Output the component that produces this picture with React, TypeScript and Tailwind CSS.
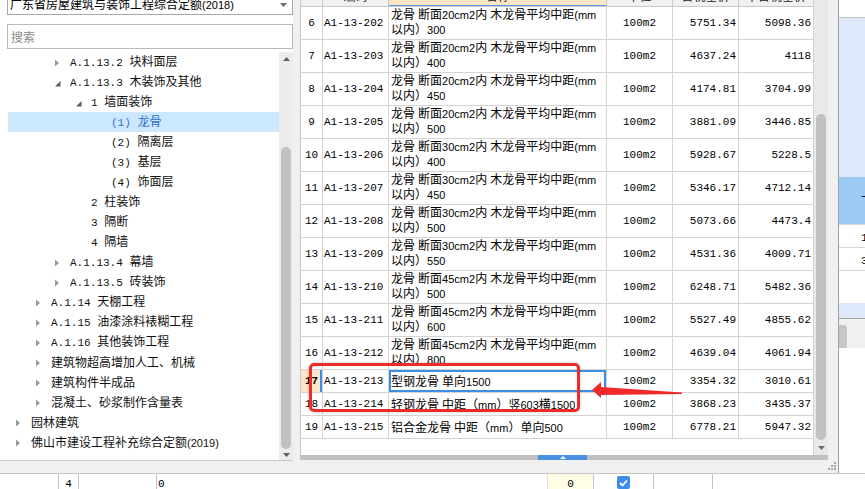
import React from "react";

const MONO = "font-['Liberation_Mono',monospace] text-[11px]";
const SANS = "font-['Liberation_Sans',sans-serif] text-[11px]";

function Mx({ t, a = "mono" }: { t: string; a?: "mono" | "sans" }) {
  const parts = t.match(/[\x00-\x7F]+|[^\x00-\x7F]+/g) ?? [];
  return (
    <>
      {parts.map((p, i) =>
        /^[\x00-\x7F]/.test(p) ? (
          <span key={i} className={a === "mono" ? MONO : SANS}>
            {p}
          </span>
        ) : (
          <span key={i}>{p}</span>
        )
      )}
    </>
  );
}

type TreeItem = { l: number; a: "c" | "e" | "n"; t: string; sel?: boolean; s?: boolean };

const tree: TreeItem[] = [
  { l: 2, a: "c", t: "A.1.13.2 块料面层" },
  { l: 2, a: "e", t: "A.1.13.3 木装饰及其他" },
  { l: 3, a: "e", t: "1 墙面装饰" },
  { l: 4, a: "n", t: "(1) 龙骨", sel: true },
  { l: 4, a: "n", t: "(2) 隔离层" },
  { l: 4, a: "n", t: "(3) 基层" },
  { l: 4, a: "n", t: "(4) 饰面层" },
  { l: 3, a: "n", t: "2 柱装饰" },
  { l: 3, a: "n", t: "3 隔断" },
  { l: 3, a: "n", t: "4 隔墙" },
  { l: 2, a: "c", t: "A.1.13.4 幕墙" },
  { l: 2, a: "c", t: "A.1.13.5 砖装饰" },
  { l: 1, a: "c", t: "A.1.14 天棚工程" },
  { l: 1, a: "c", t: "A.1.15 油漆涂料裱糊工程" },
  { l: 1, a: "c", t: "A.1.16 其他装饰工程" },
  { l: 1, a: "c", t: "建筑物超高增加人工、机械" },
  { l: 1, a: "c", t: "建筑构件半成品" },
  { l: 1, a: "c", t: "混凝土、砂浆制作含量表" },
  { l: 0, a: "c", t: "园林建筑" },
  { l: 0, a: "c", t: "佛山市建设工程补充综合定额(2019)", s: true },
];

const PL: Record<number, string> = {
  0: "pl-[8px]",
  1: "pl-[28px]",
  2: "pl-[47px]",
  3: "pl-[68px]",
  4: "pl-[88px]",
};

function Arrow({ a }: { a: "c" | "e" | "n" }) {
  if (a === "c")
    return (
      <svg width="5" height="8" viewBox="0 0 5 8" className="mt-[2px]">
        <polygon points="0,0.5 4,4 0,7.5" fill="#9a9a9a" />
      </svg>
    );
  if (a === "e")
    return (
      <svg width="6" height="6" viewBox="0 0 6 6" className="mt-[4px]">
        <polygon points="5.5,0 5.5,5.5 0,5.5" fill="#5a5a5a" />
      </svg>
    );
  return null;
}

function LeftPanel() {
  return (
    <div className="w-[293px] h-[473px] flex flex-col bg-white">
      <div className="h-[15px] pl-[7px] shrink-0">
        <div className="w-[286px] h-[15px] border-x border-b border-[#a9a9a9] overflow-hidden flex justify-between">
          <div className="-mt-[4px] pl-[2px] leading-[16px] whitespace-pre text-[12px] text-black">
            <Mx t="广东省房屋建筑与装饰工程综合定额(2018)" a="sans" />
          </div>
          <svg width="7" height="4" viewBox="0 0 7 4" className="mr-[5px] mt-[3px]">
            <polygon points="0,0 7,0 3.5,4" fill="#6e6e6e" />
          </svg>
        </div>
      </div>
      <div className="mt-[9px] ml-[7px] w-[286px] h-[25px] border border-[#b9b9b9] shrink-0 pl-[3px] leading-[23px] text-[12px] text-[#8a8a8a]">
        搜索
      </div>
      <div className="h-[412px] shrink-0 border-b border-[#c8c8c8] pt-[3px] pl-[8px] flex">
        <div className="w-[271px] h-[408px] overflow-hidden">
          {tree.map((it, i) => (
            <div
              key={i}
              className={`h-[20px] flex items-center ${PL[it.l]} ${it.sel ? "bg-[#cce8ff] text-[#2b6fd1]" : "text-[#111]"}`}
            >
              <div className="w-[15px] h-[20px] flex items-center">
                <Arrow a={it.a} />
              </div>
              <div className="whitespace-pre leading-[20px] text-[12px]">
                <Mx t={it.t} a={it.s ? "sans" : "mono"} />
              </div>
            </div>
          ))}
        </div>
        <div className="w-[14px] h-[408px] bg-[#ececec] flex flex-col items-center">
          <svg width="7" height="4" viewBox="0 0 7 4" className="mt-[5px] shrink-0">
            <polygon points="3.5,0 7,4 0,4" fill="#606060" />
          </svg>
          <div className="h-[86px] shrink-0" />
          <div className="w-[10px] h-[302px] rounded-full bg-[#c1c1c1] shrink-0" />
          <svg width="7" height="4" viewBox="0 0 7 4" className="mt-[4px] shrink-0">
            <polygon points="0,0 7,0 3.5,4" fill="#606060" />
          </svg>
        </div>
      </div>
      <div className="flex-1 bg-[#f0f0f0]" />
    </div>
  );
}

type Row = { n: number; c: string; d1: string; d2?: string; p1: string; p2: string };

const tall = [
  ["6", "A1-13-202", "20", "300", "5751.34", "5098.36"],
  ["7", "A1-13-203", "20", "400", "4637.24", "4118"],
  ["8", "A1-13-204", "20", "450", "4174.81", "3704.99"],
  ["9", "A1-13-205", "20", "500", "3881.09", "3446.85"],
  ["10", "A1-13-206", "30", "400", "5928.67", "5228.5"],
  ["11", "A1-13-207", "30", "450", "5346.17", "4712.14"],
  ["12", "A1-13-208", "30", "500", "5073.66", "4473.4"],
  ["13", "A1-13-209", "30", "550", "4531.36", "4009.71"],
  ["14", "A1-13-210", "45", "500", "6248.71", "5482.36"],
  ["15", "A1-13-211", "45", "600", "5527.49", "4855.62"],
  ["16", "A1-13-212", "45", "800", "4639.04", "4061.94"],
];

const rows: Row[] = [
  ...tall.map((r) => ({
    n: Number(r[0]),
    c: r[1],
    d1: `龙骨 断面${r[2]}cm2内 木龙骨平均中距(mm`,
    d2: `以内）${r[3]}`,
    p1: r[4],
    p2: r[5],
  })),
  { n: 17, c: "A1-13-213", d1: "型钢龙骨 单向1500", p1: "3354.32", p2: "3010.61" },
  { n: 18, c: "A1-13-214", d1: "轻钢龙骨 中距（mm）竖603横1500", p1: "3868.23", p2: "3435.37" },
  { n: 19, c: "A1-13-215", d1: "铝合金龙骨 中距（mm）单向500", p1: "6778.21", p2: "5947.32" },
];

const LINE = "border-l border-[#d4d4d4]";

function TableRow({ r }: { r: Row }) {
  const isTall = !!r.d2;
  const cur = r.n === 17;
  return (
    <div className={`flex ${isTall ? "h-[33px]" : "h-[23px]"} border-b border-[#d4d4d4] text-[12px] text-black`}>
      <div
        className={`w-[21px] flex items-center justify-center ${
          cur ? "bg-[#fde5c9] font-bold shadow-[inset_-2px_0_0_#3b8de6]" : "bg-white"
        }`}
      >
        <span className={MONO}>{r.n}</span>
      </div>
      <div className={`w-[66px] ${LINE} flex items-center pl-[1px]`}>
        <span className={MONO}>{r.c}</span>
      </div>
      <div
        className={`w-[218px] ${LINE} pl-[2px] overflow-hidden ${
          cur ? "shadow-[inset_0_0_0_2px_#3b8de6]" : ""
        } ${isTall ? "flex flex-col" : "flex items-center"}`}
      >
        <div className={`whitespace-pre overflow-hidden ${isTall ? "h-[14px] leading-[14px]" : ""}`}>
          <Mx t={r.d1} a="sans" />
        </div>
        {r.d2 && (
          <div className="whitespace-pre overflow-hidden h-[15px] leading-[15px]">
            <Mx t={r.d2} a="sans" />
          </div>
        )}
      </div>
      <div className={`w-[66px] ${LINE} flex items-center justify-center`}>
        <span className={MONO}>100m2</span>
      </div>
      <div className={`w-[66px] ${LINE} flex items-center justify-end pr-[2px]`}>
        <span className={MONO}>{r.p1}</span>
      </div>
      <div className={`w-[75px] ${LINE} flex items-center justify-end pr-[2px]`}>
        <span className={MONO}>{r.p2}</span>
      </div>
    </div>
  );
}

function HeadCell({ w, t, hl, first }: { w: string; t: string; hl?: boolean; first?: boolean }) {
  return (
    <div
      className={`${w} ${first ? "" : "border-l border-[#c8c8c8]"} h-[6px] overflow-hidden ${
        hl ? "bg-[#fde6c6] shadow-[inset_0_-1px_0_#5b9be6]" : "bg-[#f1f1f1]"
      }`}
    >
      <div className="-mt-[11px] leading-[14px] text-center text-[12px] text-[#222] whitespace-nowrap">{t}</div>
    </div>
  );
}

function MainPanel() {
  return (
    <div className="w-[546px] h-[473px] bg-[#f0f0f0] border-r border-[#a0a0a0] flex flex-col">
      <div className="flex h-[460px]">
        <div className="w-[7px]" />
        <div className="w-[528px] flex flex-col bg-white">
          <div className="flex h-[455px]">
            <div className="w-[513px] border-l border-[#c8c8c8] flex flex-col">
              <div className="flex h-[7px] border-b border-[#c8c8c8]">
                <HeadCell w="w-[21px]" t="" first />
                <HeadCell w="w-[66px]" t="编码" />
                <HeadCell w="w-[218px]" t="名称" hl />
                <HeadCell w="w-[66px]" t="单位" />
                <HeadCell w="w-[66px]" t="含税基价" />
                <HeadCell w="w-[75px]" t="不含税基价" />
              </div>
              {rows.map((r) => (
                <TableRow key={r.n} r={r} />
              ))}
            </div>
            <div className="w-[15px] border-l border-[#d4d4d4] bg-[#e9e9e9] flex flex-col">
              <div className="h-[114px] shrink-0" />
              <div className="ml-[2px] w-[10px] h-[326px] rounded-full bg-[#c1c1c1] shrink-0" />
              <svg width="7" height="4" viewBox="0 0 7 4" className="mt-[6px] ml-[4px] shrink-0">
                <polygon points="0,0 7,0 3.5,4" fill="#6b6b6b" />
              </svg>
            </div>
          </div>
          <div className="h-[5px] flex bg-[#c0c0c0]">
            <div className="w-[238px]" />
            <div className="w-[49px] bg-[#4a90e2] flex justify-center items-center">
              <svg width="6" height="3" viewBox="0 0 6 3">
                <polygon points="3,0 6,3 0,3" fill="#ffffff" />
              </svg>
            </div>
          </div>
        </div>
        <div className="flex-1" />
      </div>
      <div className="flex-1 flex justify-end pr-[2px] pt-[2px]">
        <svg width="8" height="8" viewBox="0 0 8 8">
          <rect x="6" y="0" width="2" height="2" fill="#a8a8a8" />
          <rect x="3" y="3" width="2" height="2" fill="#a8a8a8" />
          <rect x="6" y="3" width="2" height="2" fill="#a8a8a8" />
          <rect x="0" y="6" width="2" height="2" fill="#a8a8a8" />
          <rect x="3" y="6" width="2" height="2" fill="#a8a8a8" />
          <rect x="6" y="6" width="2" height="2" fill="#a8a8a8" />
        </svg>
      </div>
    </div>
  );
}

function RightPanel() {
  return (
    <div className="w-[26px] h-[473px] flex flex-col overflow-hidden text-[12px] text-black">
      <div className="h-[18px] bg-white border-b border-[#c0c0c0] shrink-0" />
      <div className="h-[159px] bg-[#dde9fb] shrink-0" />
      <div className="h-[47px] bg-[#9dcbf5] shrink-0 pl-[22px] leading-[47px] whitespace-nowrap">下</div>
      <div className="h-[23px] border-t border-[#d6d6d6] bg-white shrink-0 pl-[22px] leading-[22px] whitespace-nowrap">
        <span className={MONO}>1</span>
      </div>
      <div className="h-[23px] border-t border-[#d6d6d6] bg-white shrink-0 pl-[22px] leading-[22px] whitespace-nowrap">
        <span className={MONO}>3</span>
      </div>
      <div className="h-[33px] border-t border-[#d6d6d6] bg-white shrink-0" />
      <div className="h-[15px] bg-[#dde9fb] shrink-0" />
      <div className="h-[30px] border-t border-[#a8a8a8] bg-[#f0f0f0] shrink-0">
        <div className="w-[8px] h-[23px] mt-[6px] bg-[#c6c6c6] rounded-tr-[3px] rounded-br-[1px]" />
      </div>
      <div className="flex-1 bg-white" />
    </div>
  );
}

function BottomRow() {
  const b = "border-l border-[#c4c4c4]";
  return (
    <div className="h-[16px] border-t border-[#c4c4c4] flex bg-white text-[12px] text-black leading-[15px]">
      <div className="w-[58px]" />
      <div className={`w-[20px] ${b} text-center`}>
        <span className={MONO}>4</span>
      </div>
      <div className={`w-[78px] ${b}`} />
      <div className={`w-[391px] ${b} pl-[1px]`}>
        <span className={MONO}>0</span>
      </div>
      <div className="w-[46px] border-l border-[#e2e2e2] bg-[#fffde6] text-center">
        <span className={MONO}>0</span>
      </div>
      <div className={`w-[60px] ${b} flex justify-center`}>
        <div className="w-[13px] h-[13px] mt-[2px] rounded-[2px] bg-[#3d8ee8] flex items-center justify-center">
          <svg width="9" height="8" viewBox="0 0 9 8">
            <polyline points="1,4 3.5,6.5 8,1.5" fill="none" stroke="#ffffff" strokeWidth="1.8" />
          </svg>
        </div>
      </div>
      <div className={`w-[59px] ${b}`} />
      <div className={`flex-1 ${b}`} />
    </div>
  );
}

export default function App() {
  return (
    <div className="relative w-[865px] h-[489px] overflow-hidden bg-white font-['Noto_Sans_CJK_SC',sans-serif]">
      <div className="flex h-[473px]">
        <LeftPanel />
        <MainPanel />
        <RightPanel />
      </div>
      <BottomRow />
      <div className="absolute left-[309px] top-[363px] w-[271px] h-[49px] border-[3px] border-[#ee2b2b] rounded-[5px] shadow-[0_0_3px_rgba(0,0,0,0.25)]" />
      <svg
        className="absolute left-[586px] top-[378px]"
        width="100"
        height="24"
        viewBox="0 0 100 24"
      >
        <polygon points="6,12 15,4 15,9 96,14.5 96,16 15,17 15,20" fill="#f02a2a" />
      </svg>
    </div>
  );
}
